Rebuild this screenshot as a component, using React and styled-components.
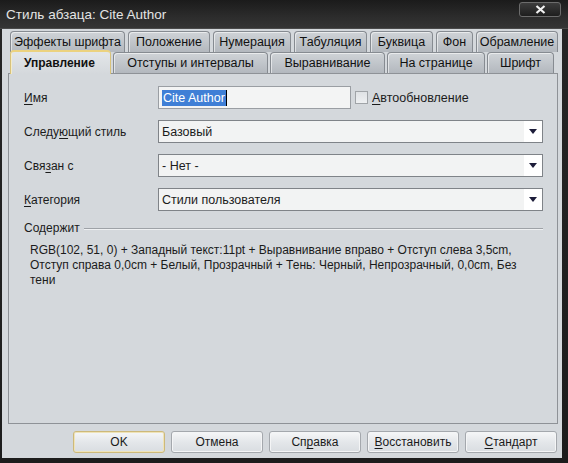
import styled, { createGlobalStyle } from "styled-components";

const GlobalStyle = createGlobalStyle`
  html, body {
    margin: 0;
    padding: 0;
    background: #1e1e1e;
  }
  body {
    font-family: "Liberation Sans", Arial, sans-serif;
    font-size: 12px;
    color: #1b1b1b;
  }
`;

const Window = styled.div`
  width: 568px;
  height: 463px;
  display: flex;
  flex-direction: column;
  background: linear-gradient(#262626, #1c1c1c);
  box-sizing: border-box;
`;

const TitleBar = styled.div`
  height: 29px;
  flex: none;
  display: flex;
  align-items: flex-start;
  justify-content: space-between;
  padding: 0 7px 0 6px;
  background: linear-gradient(#1b1b1b, #2c2c2c 60%, #353535);
  border-bottom: 1px solid #4a4a4a;
  box-sizing: border-box;
`;

const Title = styled.div`
  margin-top: 7px;
  color: #e4e4e4;
  font-size: 13.5px;
`;

const CloseButton = styled.div`
  margin-top: 2px;
  width: 42px;
  height: 15px;
  box-sizing: border-box;
  border: 1px solid #6c6c6c;
  border-radius: 3px;
  background: linear-gradient(#3c3c3c, #1e1e1e);
  display: flex;
  align-items: center;
  justify-content: center;
`;

const Content = styled.div`
  flex: 1;
  margin: 0 6px 5px 2px;
  padding: 2px 4px 0 6px;
  background: #d4d8dc;
  display: flex;
  flex-direction: column;
`;

const TabRow = styled.div`
  display: flex;
  gap: ${(p) => p.$gap}px;
  padding-left: 2px;
  height: 21px;
  align-items: flex-end;
  position: relative;
`;

const Tab = styled.div`
  width: ${(p) => p.$w}px;
  height: 21px;
  box-sizing: border-box;
  flex: none;
  display: flex;
  align-items: center;
  justify-content: center;
  border: 1px solid #868b91;
  border-bottom: none;
  border-radius: 4px 4px 0 0;
  background: linear-gradient(#cfd3d7, #b3b8be);
  box-shadow: inset 1px 1px 0 rgba(255, 255, 255, 0.55);
  font-size: 12.5px;
  color: #111;
  white-space: nowrap;
`;

const ActiveTab = styled(Tab)`
  height: 24px;
  margin-bottom: -1px;
  z-index: 2;
  border-color: #d8c27a;
  border-top: 2px solid #ecd27e;
  background: linear-gradient(#e3e6e9, #d4d8dc);
  box-shadow: inset 1px 0 0 #f4ecc8;
  font-weight: bold;
  font-size: 12px;
  justify-content: flex-start;
  padding-left: 13px;
`;

const Panel = styled.div`
  height: 351px;
  box-sizing: border-box;
  border: 1px solid #8e9297;
  background: #d4d8dc;
  padding: 12px 14px 0 15px;
  display: flex;
  flex-direction: column;
`;

const FormGrid = styled.div`
  display: grid;
  grid-template-columns: 134px 1fr;
  row-gap: 11px;
  align-items: center;
`;

const Label = styled.div`
  font-size: 12px;
  color: #1b1b1b;
`;

const U = styled.span`
  text-decoration: underline;
  text-underline-offset: 2px;
`;

const NameLine = styled.div`
  display: flex;
  align-items: center;
`;

const TextInput = styled.div`
  width: 193px;
  height: 23px;
  box-sizing: border-box;
  border: 1px solid #9a9ea3;
  background: #f3f4f4;
  display: flex;
  align-items: center;
  padding-left: 3px;
`;

const Selected = styled.span`
  background: #3f7fd6;
  color: #fff;
  font-size: 12.5px;
  line-height: 16px;
  padding: 0 1px;
  border-right: 1px solid #000;
`;

const Check = styled.div`
  width: 13px;
  height: 13px;
  box-sizing: border-box;
  margin: 0 4px 0 4px;
  border: 1px solid #a0a4a8;
  background: linear-gradient(#dfe2e5, #eef0f2);
`;

const CheckLabel = styled.div`
  font-size: 12.5px;
  color: #1b1b1b;
`;

const Select = styled.div`
  width: 385px;
  height: 23px;
  box-sizing: border-box;
  border: 1px solid #7f8388;
  background: #f2f3f3;
  display: flex;
  align-items: stretch;
`;

const SelectText = styled.div`
  flex: 1;
  display: flex;
  align-items: center;
  padding-left: 3px;
  font-size: 12.5px;
`;

const SelectButton = styled.div`
  width: 18px;
  background: #fff;
  display: flex;
  align-items: center;
  justify-content: center;
`;

const Legend = styled.div`
  margin-top: 10px;
  display: flex;
  align-items: center;
  gap: 4px;
`;

const LegendLine = styled.div`
  flex: 1;
  height: 1px;
  background: #9ea2a7;
  box-shadow: 0 1px 0 #eef0f2;
`;

const Summary = styled.p`
  margin: 8px 0 0 6px;
  font-size: 12px;
  line-height: 15px;
  color: #1b1b1b;
  max-width: 500px;
`;

const ButtonRow = styled.div`
  display: flex;
  justify-content: flex-end;
  gap: 6px;
  padding: 7px 1px 0 0;
`;

const Button = styled.div`
  width: 92px;
  height: 22px;
  box-sizing: border-box;
  border: 1px solid ${(p) => (p.$default ? "#cdb97a" : "#a4a8ad")};
  border-radius: 3px;
  background: linear-gradient(#f6f7f8, #e4e7ea 50%, #d9dde1);
  box-shadow: inset 0 0 0 1px ${(p) => (p.$default ? "#efe3b8" : "#f4f5f6")};
  display: flex;
  align-items: center;
  justify-content: center;
  font-size: 12px;
  color: #1b1b1b;
`;

const Arrow = () => (
  <svg width="8" height="5" viewBox="0 0 8 5">
    <path d="M0 0 H8 L4 5 Z" fill="#1d1d3a" />
  </svg>
);

const CloseX = () => (
  <svg width="11" height="9" viewBox="0 0 11 9">
    <path d="M1.5 1 L9.5 8 M9.5 1 L1.5 8" stroke="#f2f2f2" strokeWidth="2.2" />
  </svg>
);

const backTabs = [
  ["Эффекты шрифта", 115],
  ["Положение", 82],
  ["Нумерация", 78],
  ["Табуляция", 73],
  ["Буквица", 63],
  ["Фон", 37],
  ["Обрамление", 82],
];

const frontTabs = [
  ["Отступы и интервалы", 155],
  ["Выравнивание", 115],
  ["На странице", 98],
  ["Шрифт", 67],
];

const DropDown = ({ value }) => (
  <Select>
    <SelectText>{value}</SelectText>
    <SelectButton>
      <Arrow />
    </SelectButton>
  </Select>
);

export default function App() {
  return (
    <>
      <GlobalStyle />
      <Window>
        <TitleBar>
          <Title>Стиль абзаца: Cite Author</Title>
          <CloseButton>
            <CloseX />
          </CloseButton>
        </TitleBar>
        <Content>
          <TabRow $gap={3}>
            {backTabs.map(([t, w]) => (
              <Tab key={t} $w={w}>
                {t}
              </Tab>
            ))}
          </TabRow>
          <TabRow $gap={2}>
            <ActiveTab $w={101}>Управление</ActiveTab>
            {frontTabs.map(([t, w]) => (
              <Tab key={t} $w={w}>
                {t}
              </Tab>
            ))}
          </TabRow>
          <Panel>
            <FormGrid>
              <Label>
                <U>И</U>мя
              </Label>
              <NameLine>
                <TextInput>
                  <Selected>Cite Author</Selected>
                </TextInput>
                <Check />
                <CheckLabel>
                  <U>А</U>втообновление
                </CheckLabel>
              </NameLine>
              <Label>
                Следу<U>ю</U>щий стиль
              </Label>
              <DropDown value="Базовый" />
              <Label>
                Свя<U>з</U>ан с
              </Label>
              <DropDown value="- Нет -" />
              <Label>
                <U>К</U>атегория
              </Label>
              <DropDown value="Стили пользователя" />
            </FormGrid>
            <Legend>
              <Label>Содержит</Label>
              <LegendLine />
            </Legend>
            <Summary>
              RGB(102, 51, 0) + Западный текст:11pt + Выравнивание вправо +
              Отступ слева 3,5cm, Отступ справа 0,0cm + Белый, Прозрачный +
              Тень: Черный, Непрозрачный, 0,0cm, Без тени
            </Summary>
          </Panel>
          <ButtonRow>
            <Button $default>OK</Button>
            <Button>Отмена</Button>
            <Button>
              Сп<U>р</U>авка
            </Button>
            <Button>
              <U>В</U>осстановить
            </Button>
            <Button>
              <U>С</U>тандарт
            </Button>
          </ButtonRow>
        </Content>
      </Window>
    </>
  );
}
